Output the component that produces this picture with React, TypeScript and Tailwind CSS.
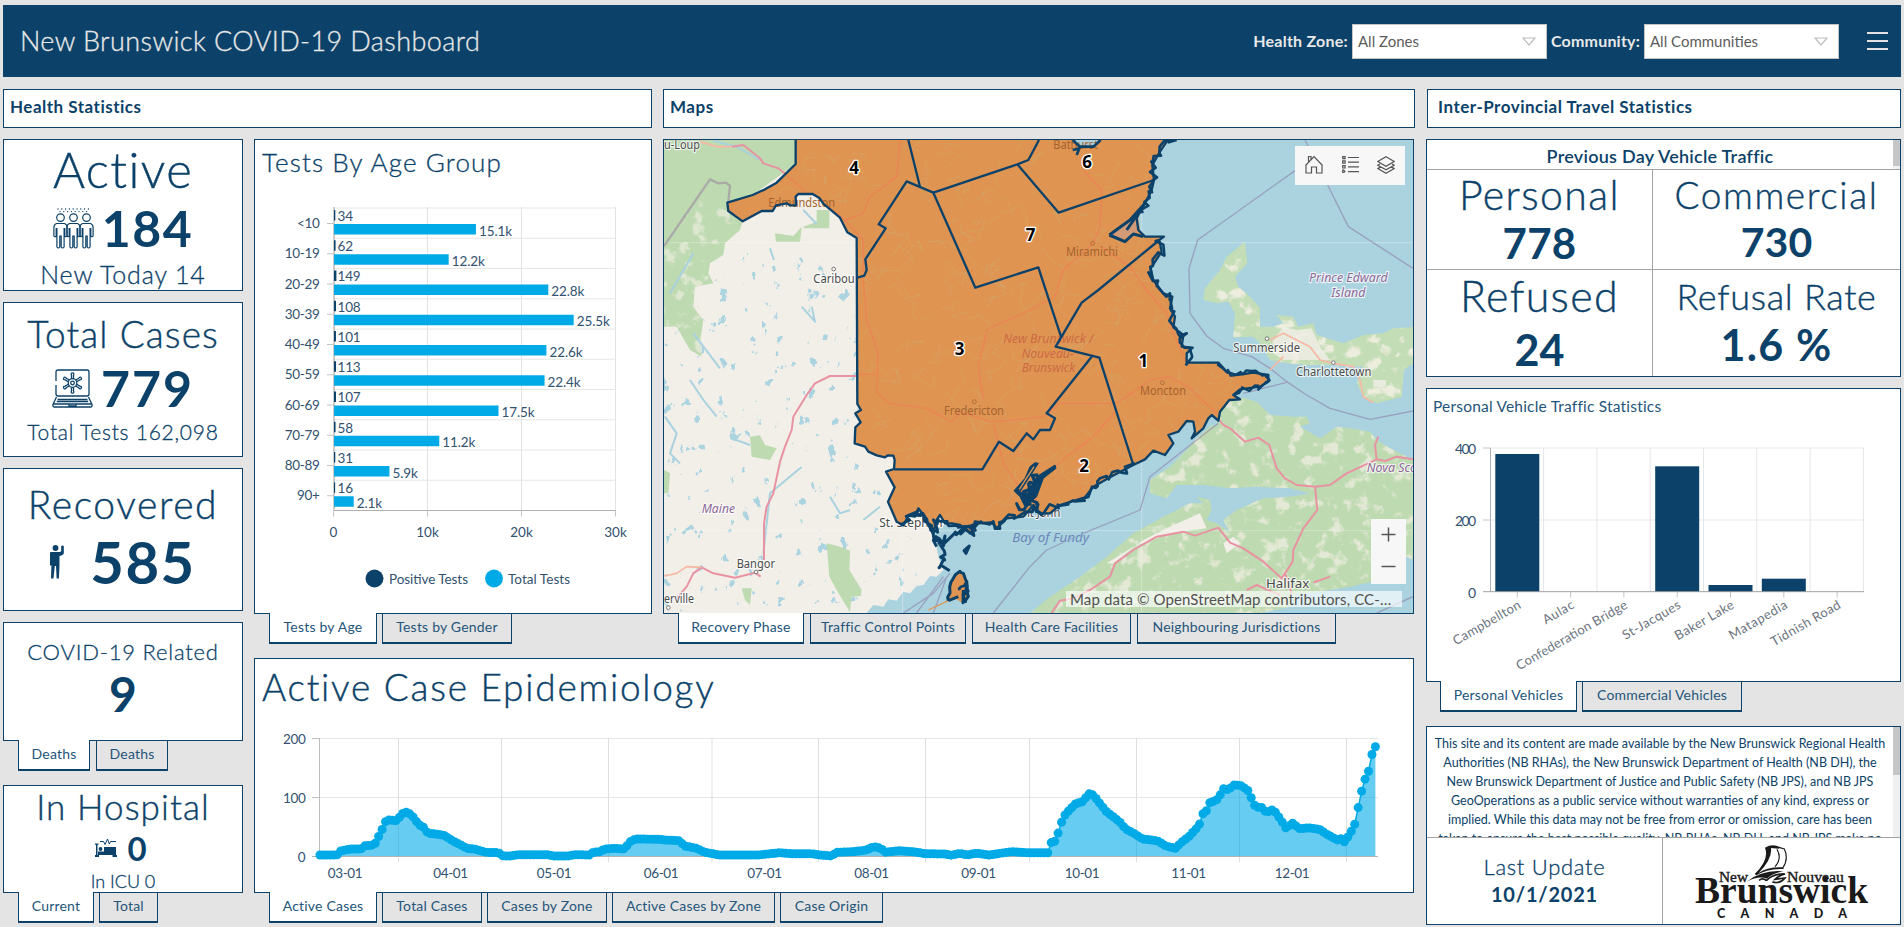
import { Fragment, type ReactNode } from "react";

const NAVY = "#0c4269";
const SKY = "#00aae7";

/* ---------- shared pieces ---------- */

function Panel({ className = "", children }: { className?: string; children: ReactNode }) {
  return <section className={`overflow-hidden border border-[#0c4269] bg-white ${className}`}>{children}</section>;
}

function Tabs({ items, gap = "gap-[5px]", inset = "ml-[15px]" }: { items: [string, string][]; gap?: string; inset?: string }) {
  return (
    <div className={`relative -mt-px flex h-[31px] ${inset} ${gap}`}>
      {items.map(([label, width], i) => (
        <button
          key={i}
          className={`${width} whitespace-nowrap border-x border-b-2 border-[#0c4269] pb-[3px] text-center text-[14px] tracking-[0.2px] text-[#24557a] ${
            i === 0 ? "bg-white" : "border-t bg-[#e4e4e4]"
          }`}
        >
          {label}
        </button>
      ))}
    </div>
  );
}

/* ---------- icons ---------- */

function PeopleIcon() {
  const dots: [number, number][] = [];
  for (let i = 0; i < 9; i++) {
    dots.push([5 + i * 3.8, 1]);
    if (i < 8) dots.push([7 + i * 3.8, 3.6]);
  }
  return (
    <svg className="h-[41px] w-[41px]" viewBox="0 0 41 41" fill="none" stroke={NAVY} strokeWidth="1.2">
      {dots.map(([x, y], i) => (
        <circle key={i} cx={x} cy={y} r=".7" fill={NAVY} stroke="none" />
      ))}
      {[7.5, 20.5, 33.5].map((x) => (
        <Fragment key={x}>
          <circle cx={x} cy="9.6" r="3.8" />
          <path d={`M${x - 4} 15.5h8q2.600 1 2.600 4v8.500q-1 1.500-2.300 0v-8M${x - 4} 15.500q-2.600 1-2.600 4v8.500q1 1.500 2.300 0v-8M${x - 3.600} 20v19q1.500 2 2.900 0v-11h1.400v11q1.400 2 2.900 0v-19`} />
        </Fragment>
      ))}
    </svg>
  );
}

function LaptopIcon() {
  return (
    <svg className="h-[39px] w-[41px]" viewBox="0 0 41 39" fill="none" stroke={NAVY} strokeWidth="1.3">
      <path d="M4 12V3q0-2 2-2h29q2 0 2 2v22q0 2-2 2H6q-2 0-2-2V16" />
      <path d="M4.500 28L1 35.500q-.5 2.500 1.500 2.500h36q2 0 1.500-2.500L36.500 28M1 35h39M5.500 30.500h30M4.800 32.500h31.400M17 35.500v1.300h7v-1.300" />
      <circle cx="20.500" cy="14" r="4.300" />
      <circle cx="20.500" cy="14" r="1.800" />
      {[0, 60, 120, 180, 240, 300].map((a) => (
        <path key={a} transform={`rotate(${a} 20.500 14)`} d="M19.500 9.800V6.200q-1-2.300 1-2.300t1 2.300v3.600" />
      ))}
    </svg>
  );
}

function PersonIcon() {
  return (
    <svg className="h-[34px] w-[14px]" viewBox="0 0 14 34" fill={NAVY}>
      <circle cx="5.500" cy="3" r="2.900" />
      <path d="M1 7h8q1.800 0 2.200-.8V1q1.400-1 2.600 0v7q0 2-4.300 3v9.500l-.6 13H6.600L6 21H4.800L3.500 33.500H1l.4-13H0V8q0-1 1-1z" />
    </svg>
  );
}

function BedIcon() {
  return (
    <svg className="h-[20px] w-[22px]" viewBox="0 0 22 20" fill={NAVY}>
      <path d="M0 5.500h3.500v1.200H2.500V17H4v2H0v-2h1V6.700H0zM17.500 17h1V9H21v8h1v2h-4.500z" />
      <path d="M3 14h17v3H3zM9 9h12v6H3v-1.500h6z" />
      <circle cx="5.500" cy="11" r="1.900" />
      <path d="M5 3.500h3.500l1.500 3L12.500 1l1.800 5 1.200-2.500H21" fill="none" stroke={NAVY} strokeWidth="1" />
    </svg>
  );
}

/* ---------- header ---------- */

function Select({ value }: { value: string }) {
  return (
    <div className="flex h-[35px] w-[195px] items-center justify-between border border-[#c4c4c4] bg-white pr-[10px] pl-[5px] text-[15px] text-[#5c5c5c]">
      <span>{value}</span>
      <svg className="h-[9px] w-[14px]" viewBox="0 0 14 9" fill="none" stroke="#bdbdbd" strokeWidth="1.200">
        <path d="M1 1h12L7 8z" />
      </svg>
    </div>
  );
}

function Header() {
  return (
    <header className="flex h-[72px] items-center bg-[#0c4269] text-[#e8e8e8]">
      <h1 className="ml-[17px] flex-1 text-[27px] font-light tracking-[0.4px] [-webkit-text-stroke:0.3px]">New Brunswick COVID-19 Dashboard</h1>
      <span className="mr-[4px] text-[16px] font-bold tracking-[0.25px]">Health Zone:</span>
      <Select value="All Zones" />
      <span className="mr-[4px] ml-[4px] text-[16px] font-bold tracking-[0.2px]">Community:</span>
      <Select value="All Communities" />
      <svg className="mr-[13px] ml-[28px] h-[18px] w-[21px]" viewBox="0 0 21 18" stroke="#e4e4e4" strokeWidth="2">
        <path d="M0 1h21M0 9h21M0 17h21" />
      </svg>
    </header>
  );
}

/* ---------- age chart ---------- */

const ages: [string, number, string, number][] = [
  ["<10", 34, "15.1k", 15.1],
  ["10-19", 62, "12.2k", 12.2],
  ["20-29", 149, "22.8k", 22.8],
  ["30-39", 108, "25.5k", 25.5],
  ["40-49", 101, "22.6k", 22.6],
  ["50-59", 113, "22.4k", 22.4],
  ["60-69", 107, "17.5k", 17.5],
  ["70-79", 58, "11.2k", 11.2],
  ["80-89", 31, "5.9k", 5.9],
  ["90+", 16, "2.1k", 2.1],
];

function AgeChart() {
  return (
    <svg className="block h-[429px] w-[396px]" viewBox="255 184 396 429" fontSize="13.500" fill="#32526f">
      {[427.500, 521.500, 615.500].map((x) => (
        <path key={x} d={`M${x} 207V510`} stroke="#e2e2e2" />
      ))}
      {ages.map((_, i) => (
        <path key={i} d={`M334 ${208 + i * 30.25}H615.500`} stroke="#e6e6e6" />
      ))}
      <path d="M334 207V510" stroke="#9a9a9a" />
      {ages.map(([label, pos, total, k], i) => {
        const y = 208 + i * 30.25;
        const end = 334 + k * 9.4;
        return (
          <Fragment key={label}>
            <path d={`M327 ${y + 15.500}h7`} stroke="#c4c4c4" />
            <text x="319.500" y={y + 20} textAnchor="end" letterSpacing="-.3">{label}</text>
            <rect x="334" y={y + 2} width={1 + pos * 0.0094} height="10.500" fill={NAVY} />
            <text x="337.500" y={y + 12.800} letterSpacing="-.2">{pos}</text>
            <rect x="334" y={y + 16} width={end - 334} height="10.500" fill={SKY} />
            <text x={end + 3} y={y + 27.700} letterSpacing="-.1">{total}</text>
          </Fragment>
        );
      })}
      <path d="M334 510.500H616" stroke="#b0b0b0" />
      {["0", "10k", "20k", "30k"].map((t, i) => (
        <Fragment key={t}>
          <path d={`M${333.500 + i * 94} 510.500v6`} stroke="#c4c4c4" />
          <text x={333.500 + i * 94} y="537" textAnchor="middle">{t}</text>
        </Fragment>
      ))}
      <circle cx="374.500" cy="578.500" r="9" fill={NAVY} />
      <circle cx="494" cy="578.500" r="9" fill={SKY} />
      <text x="389" y="584" textLength="79">Positive Tests</text>
      <text x="508" y="584" textLength="62">Total Tests</text>
    </svg>
  );
}

/* ---------- epidemiology chart ---------- */

const curve: [number, number][] = [
  [320, 855], [337, 855], [341, 850.7], [351, 849], [361, 849], [365, 845.7], [374, 845], [377, 840.7], [380, 833], [383, 828],
  [385.5, 821.7], [389, 820], [396, 820.7], [400, 816.7], [403, 813.3], [406.6, 812], [410, 814], [414.6, 818.3], [418, 824], [422, 826.7],
  [425, 828], [427.6, 833.3], [433.5, 833.7], [444, 835.3], [452.4, 840.7], [458.8, 844], [467, 848.3], [475.6, 849.3], [486, 852.3], [498.7, 852.7],
  [503, 856], [511, 856], [517.7, 854.7], [547, 854.7], [553.5, 856], [568, 856], [574.5, 854.7], [589, 855], [593.4, 852.3], [599.7, 851.7],
  [604.8, 849], [614.5, 848.3], [625, 849], [629, 842.3], [635.5, 839], [660, 839.3], [664.7, 840], [679.5, 840.7], [684.4, 846], [696.7, 848.3],
  [704, 852], [718.8, 855], [758, 855], [780, 852.7], [790, 853.7], [812, 853.7], [819.5, 855], [831.7, 856], [836.6, 852.3], [853.8, 851.7],
  [866, 850], [873.5, 846.7], [880.8, 848.3], [885.8, 852.3], [898, 850.7], [915, 852], [925, 853.7], [944.7, 854], [952, 855.3], [959.4, 853.3],
  [966.8, 855], [976.6, 853.3], [989, 855], [1011, 851.7], [1028, 852.7], [1047.8, 852.7], [1051.3, 842.3], [1054.7, 841.3], [1057.7, 834.3], [1061.6, 822],
  [1065.5, 814], [1076, 803.3], [1082, 802], [1089.6, 793.3], [1093.5, 795.3], [1099, 802.3], [1106.8, 812], [1114, 817.3], [1120.5, 822.7], [1125.5, 829],
  [1133.8, 833.3], [1142.6, 839], [1157.4, 840.7], [1165.7, 846], [1175.5, 848.3], [1181.4, 842.3], [1188.8, 836.7], [1194, 831], [1199, 825.7], [1202.6, 814],
  [1206.5, 810.7], [1210, 802.3], [1216, 800.7], [1221, 793.7], [1224, 788], [1228, 790], [1234.5, 784.7], [1241.4, 785.7], [1248, 790.7], [1251.7, 798.7],
  [1255.6, 807.3], [1261.5, 807.3], [1266.4, 812.7], [1273.3, 809.3], [1281, 820], [1286, 828.3], [1292.4, 823], [1300, 829], [1308, 827.7], [1319.5, 829.3],
  [1328, 835], [1337.6, 840], [1341, 838.7], [1344, 842.3], [1348, 836.7], [1351.4, 831], [1355.3, 823], [1358, 808.3], [1361.7, 790.7], [1365, 779.3],
  [1368.6, 771], [1372, 754.3], [1375.4, 746.7],
];

function sampleCurve(count: number): [number, number][] {
  const step = (1375.4 - 320) / (count - 1);
  return Array.from({ length: count }, (_, i) => {
    const x = 320 + i * step;
    let k = curve.findIndex((p) => p[0] >= x - 0.001);
    if (k < 0) k = curve.length - 1;
    if (k === 0) return curve[0];
    const [x0, y0] = curve[k - 1];
    const [x1, y1] = curve[k];
    return [x, y0 + ((x - x0) / (x1 - x0)) * (y1 - y0)];
  });
}

const days = sampleCurve(307);
const months: [string, number][] = [
  ["03-01", 345], ["04-01", 450.5], ["05-01", 554], ["06-01", 661], ["07-01", 764.5],
  ["08-01", 871.5], ["09-01", 978.5], ["10-01", 1082], ["11-01", 1188.5], ["12-01", 1292],
];

function EpidemiologyChart() {
  const line = days.map(([x, y]) => `${x.toFixed(1)} ${y.toFixed(1)}`).join("L");
  return (
    <svg className="block h-[177px] w-[1158px]" viewBox="255 715 1158 177" fontSize="13.500" fill="#32526f">
      <path d="M319 738.500H1378M319 797.500H1378" stroke="#e6e6e6" />
      {[398.5, 501.5, 608.5, 712, 818.5, 925.5, 1029.5, 1136.5, 1239.5, 1346.5].map((x) => (
        <path key={x} d={`M${x} 738V862`} stroke="#dfdfdf" />
      ))}
      <path d={`M320 856.500L${line}L1375.400 856.500Z`} fill={SKY} fillOpacity=".6" />
      <path d="M312 738.500h7M312 797.500h7M319.500 738V856" stroke="#bdbdbd" fill="none" />
      <path d="M312 856.500H1378" stroke="#b3b3b3" />
      <path d={`M${line}`} fill="none" stroke={SKY} strokeWidth="1.500" />
      {days.map(([x, y]) => (
        <circle key={x} cx={x} cy={y} r="4.500" fill={SKY} />
      ))}
      <text x="305.500" y="743.500" textAnchor="end" letterSpacing="-.3">200</text>
      <text x="305.500" y="803" textAnchor="end" letterSpacing="-.3">100</text>
      <text x="305.500" y="861.500" textAnchor="end">0</text>
      {months.map(([m, x]) => (
        <text key={m} x={x} y="877.500" textAnchor="middle" letterSpacing="-.4">{m}</text>
      ))}
    </svg>
  );
}

/* ---------- vehicle chart ---------- */

const vehicles: [string, number, number][] = [
  ["Campbellton", 454, 76],
  ["Aulac", 0, 34],
  ["Confederation Bridge", 0, 126],
  ["St-Jacques", 466.3, 65],
  ["Baker Lake", 585, 66],
  ["Matapedia", 578.7, 65],
  ["Tidnish Road", 0, 78],
];

function VehicleChart() {
  return (
    <svg className="block h-[256px] w-[473px]" viewBox="1427 425 473 256" fontSize="14" fill="#32526f">
      <path d="M1490 448H1864M1490 520H1864" stroke="#e9e9e9" />
      {vehicles.map(([name, top, len], i) => {
        const x = 1490.3 + i * 53.3;
        return (
          <Fragment key={name}>
            <path d={`M${x + 53.3} 448V592`} stroke="#e6e6e6" />
            {top > 0 && <rect x={x + 5} y={top} width="44" height={592 - top} fill={NAVY} />}
            <path d={`M${x + 27} 592v5.500`} stroke="#c4c4c4" />
            <text transform={`translate(${x + 31.500} 607.500) rotate(-30)`} textAnchor="end" textLength={len} fontSize="13" fill="#6c7480">
              {name}
            </text>
          </Fragment>
        );
      })}
      <path d="M1483 448h7M1483 520h7" stroke="#c4c4c4" />
      <path d="M1490.500 448V592" stroke="#b0b0b0" />
      <path d="M1483 591.700H1864" stroke="#a0a0a0" />
      <text x="1476" y="453.500" textAnchor="end" textLength="21">400</text>
      <text x="1476" y="525.500" textAnchor="end" textLength="21">200</text>
      <text x="1476" y="597.500" textAnchor="end">0</text>
    </svg>
  );
}

/* ---------- map ---------- */

function seeded(seed: number) {
  let s = seed;
  return () => {
    s = (s * 16807) % 2147483647;
    return s / 2147483647;
  };
}

/* Roughens a polyline into a coast-like outline. */
function jag(points: number[][], amp: number, step: number, seed: number) {
  const rnd = seeded(seed);
  let d = `M${points[0][0]} ${points[0][1]}`;
  for (let i = 1; i < points.length; i++) {
    const [x0, y0] = points[i - 1];
    const [x1, y1] = points[i];
    const n = Math.max(1, Math.round(Math.hypot(x1 - x0, y1 - y0) / step));
    for (let k = 1; k <= n; k++) {
      const t = k / n;
      d += `L${(x0 + (x1 - x0) * t + (rnd() - 0.5) * amp).toFixed(0)} ${(y0 + (y1 - y0) * t + (rnd() - 0.5) * amp).toFixed(0)}`;
    }
  }
  return d;
}

const NB_WEST =
  "M437 170V252L380 308L345 328L308 345L232 368L235 393L278 424L335 393H368L378 376L410 370L420 376H438L437 350L445 342H488L508 354L520 371L570 413L592 457L620 474L622 972L633 990L616 1000L632 1027L616 1042L614 1090L645 1100L655 1115L680 1126L705 1132L714 1126L730 1127L734 1140L732 1167";
const NB_OUTLINE =
  NB_WEST +
  "L708 1175L734 1222L714 1265L740 1325L760 1336L775 1307L795 1310L805 1285L825 1310L840 1345L850 1362L860 1320L870 1305L885 1330H905L930 1335L960 1360L985 1330L1025 1327L1040 1345L1070 1315L1120 1310L1150 1275L1170 1300H1200L1230 1275L1305 1252L1330 1220L1380 1192L1450 1155L1485 1138L1510 1112L1545 1125L1570 1090L1555 1065L1585 1055L1610 1023L1630 1025L1635 1055L1625 1075L1660 1045L1675 1015L1685 1005L1705 1022L1710 995L1738 960L1770 958L1750 945L1770 928L1830 920L1855 905V885L1810 878L1760 885L1730 875L1705 848H1670H1610V820L1628 803L1595 800L1600 765L1570 742L1575 710L1560 685L1567 650L1540 640L1510 600L1502 565L1535 515L1528 480L1542 470H1485L1465 450L1460 415L1475 385L1485 370L1505 330L1512 300L1507 255L1530 215L1550 185L1580 170Z";
const ZONE_LINES =
  "M775 180L810 320M622 593L643 587L650 570L646 538L707 445L686 433L770 304L850 338L1102 253L1135 240L1167 180M850 338L976 623L1165 562L1233 770M1102 253L1226 398L1512 300M1528 480L1345 630L1295 668L1217 800L1348 833L1450 1155M1325 830L1190 1000L1215 1015L1200 1050L1170 1050L1150 1078L1130 1060L1090 1113L1047 1085L997 1168H732";

const NE_COAST = [[1580, 180], [1540, 190], [1530, 215], [1507, 255], [1512, 300], [1505, 330], [1485, 370], [1465, 410]];
const E_COAST = [[1528, 480], [1535, 515], [1502, 565], [1510, 600], [1540, 640], [1567, 650], [1560, 685], [1570, 742], [1600, 765], [1595, 800], [1628, 803], [1610, 848]];
const CAPE = [[1705, 848], [1730, 875], [1760, 885], [1810, 878], [1855, 885], [1855, 905], [1830, 920], [1770, 928], [1750, 945]];
const S_COAST = [[760, 1336], [775, 1307], [805, 1295], [830, 1315], [850, 1362], [865, 1310], [905, 1330], [930, 1340], [960, 1360], [985, 1330], [1025, 1327], [1040, 1345], [1070, 1315], [1120, 1310], [1150, 1275], [1170, 1300], [1230, 1275], [1305, 1252], [1330, 1220], [1380, 1192], [1450, 1155]];

const PEI =
  "M1785 485L1792 550L1755 590L1765 620L1800 650L1830 685V740H1870L1900 730L1880 705L1930 710L1945 740L1990 730L2000 765L2080 790L2140 765L2200 760L2230 745L2290 742V850L2262 870L2255 950L2180 970L2140 950L2120 910L2140 860L2040 855L1970 855L1910 850L1860 840L1830 790L1810 770L1750 772L1755 700L1735 665L1700 670L1660 660L1665 625L1710 570L1730 530Z";
const NS =
  "M1710 995L1738 960L1780 953L1820 965L1860 1005L1930 1010L1970 1010L1980 1030L1950 1040L2010 1075L2060 1040L2100 1045L2160 1055L2180 1080L2220 1105L2290 1140V1440L2270 1430L2240 1460L2190 1500L2100 1520L2040 1530L1980 1540L1940 1540L1920 1580L1830 1600H1140L1200 1550L1290 1490L1370 1430L1450 1360L1540 1310L1620 1270L1660 1270L1640 1250L1680 1260L1685 1290L1670 1320L1700 1330L1730 1350L1740 1360L1720 1320L1760 1290L1840 1255L1920 1250L1980 1240L1920 1225L1820 1220L1740 1225L1660 1215L1580 1215L1550 1255L1500 1240L1500 1200L1560 1160L1610 1110L1640 1075L1685 1035L1700 1040Z";
const GREEN_WEST =
  "M42 180H437V252L308 345L232 368L235 393L278 424L270 450L225 490L220 525L180 550L175 580L190 610L135 620L130 680L160 720L150 790L155 830L120 810L80 740L42 740Z";

function backRoads() {
  const rnd = seeded(77);
  let d = "";
  for (let i = 0; i < 360; i++) {
    let x = 440 + rnd() * 1300;
    let y = 190 + rnd() * 1130;
    d += `M${x.toFixed(0)} ${y.toFixed(0)}`;
    for (let k = 0; k < 3; k++) {
      x += (rnd() - 0.5) * 90;
      y += (rnd() - 0.5) * 80;
      d += `L${x.toFixed(0)} ${y.toFixed(0)}`;
    }
  }
  return d;
}

type Label = [string, number, number, number, string, string];
const PLACE = "#4a4a4a";
const FADED = "#a4632f";
const REGION = "#8d6797";
const mapLabels: Label[] = [
  ["u-Loup", 42, 207, 108, PLACE, "normal"],
  ["Caribou", 490, 608, 124, PLACE, "normal"],
  ["Bangor", 260, 1463, 115, PLACE, "normal"],
  ["erville", 42, 1570, 90, PLACE, "normal"],
  ["Summerside", 1750, 816, 200, PLACE, "normal"],
  ["Charlottetown", 1938, 888, 226, PLACE, "normal"],
  ["Halifax", 1848, 1525, 130, PLACE, "normal"],
  ["Maine", 155, 1300, 100, REGION, "italic"],
  ["Prince Edward", 1977, 606, 236, REGION, "italic"],
  ["Island", 2044, 651, 102, REGION, "italic"],
  ["Nova Scotia", 2150, 1175, 194, REGION, "italic"],
];
const coastLabels: Label[] = [
  ["St. Stephen", 688, 1342, 190, PLACE, "normal"],
  ["Saint John", 1073, 1312, 158, PLACE, "normal"],
];
const fadedLabels: Label[] = [
  ["Edmundston", 355, 380, 200, FADED, "normal"],
  ["Bathurst", 1210, 208, 134, FADED, "normal"],
  ["Miramichi", 1248, 528, 156, FADED, "normal"],
  ["Fredericton", 882, 1006, 180, FADED, "normal"],
  ["Moncton", 1470, 946, 138, FADED, "normal"],
  ["New Brunswick /", 1060, 788, 270, "#cc6a45", "italic"],
  ["Nouveau-", 1115, 834, 156, "#cc6a45", "italic"],
  ["Brunswick", 1115, 877, 160, "#cc6a45", "italic"],
];

function MapText({ label, halo }: { label: Label; halo: boolean }) {
  const [text, x, y, len, fill, style] = label;
  return (
    <text
      x={x}
      y={y}
      textLength={len}
      lengthAdjust="spacingAndGlyphs"
      fill={fill}
      fontStyle={style}
      stroke={halo ? "#ffffff" : "none"}
      strokeOpacity=".75"
      strokeWidth={halo ? 7 : 0}
      paintOrder="stroke"
    >
      {text}
    </text>
  );
}

const zones: [string, number, number][] = [
  ["4", 612, 281], ["6", 1311, 265], ["7", 1142, 484], ["3", 929, 824], ["1", 1480, 860], ["2", 1302, 1176],
];

function ProvinceMap() {
  return (
    <svg
      className="block h-[473px] w-[749px]"
      viewBox="42 180 2247 1419"
      fontFamily="'Noto Sans', 'Open Sans', sans-serif"
      fontSize="38"
      strokeLinejoin="round"
    >
      <defs>
        <filter id="clearings" x="0" y="0" width="1" height="1" colorInterpolationFilters="sRGB">
          <feTurbulence type="fractalNoise" baseFrequency=".024" numOctaves="6" seed="4" />
          <feColorMatrix values="0 0 0 0 .93  0 0 0 0 .93  0 0 0 0 .87  0 6 0 0 -3.3" />
          <feComposite in2="SourceGraphic" operator="in" />
        </filter>
        <filter id="lakes" x="0" y="0" width="1" height="1" colorInterpolationFilters="sRGB">
          <feTurbulence type="fractalNoise" baseFrequency=".03 .024" numOctaves="4" seed="11" />
          <feColorMatrix values="0 0 0 0 .67  0 0 0 0 .83  0 0 0 0 .88  0 24 0 0 -16.800" />
          <feComposite in2="SourceGraphic" operator="in" />
        </filter>
      </defs>
      <rect x="42" y="180" width="2247" height="1419" fill="#aad3df" />
      <path d="M42 180H1500L1300 1000L960 1300L850 1350L865 1430L880 1470L860 1490L840 1488L820 1515L800 1518L780 1540L760 1535L740 1562L715 1558L700 1580L670 1575L650 1599H42Z" fill="#f2efe9" />
      <path d="M42 520H620V970L740 1330L850 1450L700 1560L42 1599Z" fill="#000" filter="url(#lakes)" />
      <path d={GREEN_WEST} fill="#bddab1" />
      <path d="M42 480L150 360L232 393L278 424L225 490L180 550L190 610L135 620L160 720L155 830L80 740H42Z" fill="#000" filter="url(#clearings)" opacity=".7" />
      <path d="M460 440L500 425V390H538V445H462ZM375 460L430 468L455 440L450 485H378Z" fill="#bddab1" />
      <path d="M530 1390L570 1400L600 1412L598 1470L635 1530L632 1548L604 1550L600 1597L560 1530L538 1490ZM300 1070L330 1066L345 1095L380 1105L360 1140L305 1130ZM42 1170L60 1180L55 1240H42ZM275 1525L305 1525L300 1575L285 1560Z" fill="#bddab1" />
      <path d="M190 182L260 200L330 240M130 520L60 640M460 390L500 432M360 505L372 540M455 680L495 725L485 680M130 760L210 865M120 900L160 960L200 1010M245 1075L300 1095M45 1010L80 1060L60 1120L90 1150M340 1420L360 1240L450 1165M540 1250L570 1300L600 1290M640 1320L690 1280" fill="none" stroke="#a9d2de" strokeWidth="6" />
      <path d={NS} fill="#bddab1" />
      <path d={NS} fill="#000" filter="url(#clearings)" opacity=".8" />
      <path d="M1390 1450L1480 1380L1560 1340L1650 1300L1670 1345L1560 1360L1450 1400L1370 1450ZM1720 1390L1750 1370L1770 1390L1730 1420Z" fill="#f2efe9" />
      <path d={PEI} fill="#c3ddb6" />
      <path d={PEI} fill="#000" filter="url(#clearings)" />
      <path d="M1870 780L1900 740L1940 750L1985 745L2010 800L2040 840L1900 840L1870 820ZM2170 900H2208V920H2170Z" fill="#f2efe9" fillOpacity=".8" />
      <path d="M1475 180V1599M42 488H2289M758 1350V1599M42 1352H2289" stroke="#fff" strokeOpacity=".45" strokeWidth="2" />
      <g fill="none" stroke="#8e7ea8" strokeOpacity=".6" strokeWidth="4">
        <path d="M42 498L180 298L205 310L228 308L240 318L235 365" stroke="#9d8aa0" strokeWidth="7" />
        <path d="M1935 272L1643 480L1617 565L1620 700L1670 768L1720 805L1805 830L1860 865L1910 905L1970 945L2040 985L2160 1018L2289 993M1965 180L2033 315L2095 440L2289 565M1910 907L1780 940M1705 1030L1640 1080L1500 1190L1470 1290L1300 1360L1190 1410L1140 1460L1030 1599M880 1490L800 1599M890 1490L850 1599M900 1480L850 1540L760 1599M2289 1550L2180 1599" />
      </g>
      <g fill="none" stroke="#e892a2" strokeWidth="6">
        <path d="M245 200L280 195L330 235L340 250L385 265L410 285M620 888H540L495 910L470 945L430 1010L425 1050L405 1100L390 1145L370 1240L350 1280L342 1330V1440M332 1490L315 1478L255 1493L190 1480L155 1462L130 1480L110 1520L80 1555" />
        <path d="M1708 1020L1720 1035L1740 1045L1785 1085L1825 1073L1858 1095L1880 1165L1905 1195L1940 1215L1995 1220L2040 1215L2090 1180L2180 1138L2205 1143L2240 1130L2289 1138M1995 1220L2002 1290L1960 1345L1930 1410L1928 1445L1895 1495L1840 1445L1780 1405L1740 1388L1705 1343L1635 1367L1600 1355L1520 1370L1450 1410L1395 1450L1380 1490L1320 1530L1270 1555L1230 1562L1205 1599M2185 1070L2175 1095L2180 1138M1790 1530L1820 1515L1890 1545M1905 1480L1925 1540M1990 1508L2040 1490" />
        <path d="M42 1488L80 1480L110 1460L155 1462M150 185L200 200L245 200M1860 780L1900 760L1980 800L2010 840L2050 850L2110 860L2130 900L2140 950L2170 968M1900 830L1860 870" stroke="#f6b8a4" strokeWidth="5" />
      </g>
      {coastLabels.map((l) => <MapText key={l[0]} label={l} halo />)}
      <path d={NB_OUTLINE} fill="#e09451" />
      <path d="M1378 465L1440 420L1465 410L1470 450L1440 470L1400 480Z" fill="#d39a78" />
      <path d="M1268 170L1290 200L1330 200L1352 170Z" fill="#aad3df" />
      <g clipPath="url(#nb)" fill="none">
        <path d={backRoads()} stroke="#cfae72" strokeOpacity=".6" strokeWidth="2" />
        <path d="M410 285L460 330L575 410L640 480V600L650 720L685 820L680 940L720 970L830 985L905 1025L930 995L1020 1025L1100 1020L1180 1010L1230 970L1400 970L1500 900L1560 890L1620 925L1700 1000M575 425L640 400L660 350L740 290L750 180M1300 270L1355 330L1350 440L1330 490L1240 570L1215 650L1140 690L1010 750L985 860L1000 960M1355 500L1440 560L1490 630L1550 700L1570 760L1610 850M1150 1290L1170 1200L1250 1130L1330 1070L1400 990M622 883H680M1030 1030L1060 1150L1140 1270" stroke="#ef7f55" strokeOpacity=".75" strokeWidth="4" />
      </g>
      <clipPath id="nb"><path d={NB_OUTLINE} /></clipPath>
      {fadedLabels.map((l) => <MapText key={l[0]} label={l} halo={false} />)}
      <g fill="none" stroke={NAVY} strokeWidth="7">
        <path d={NB_OUTLINE} />
        <path d={ZONE_LINES} />
        <path d="M1268 180L1290 200L1280 225M1290 200H1330L1352 180M1268 210L1290 205" strokeWidth="8" />
        <path d="M1378 465L1440 420L1485 370M1378 465L1425 485L1450 462L1480 470M1430 450L1465 400" strokeWidth="9" />
        <path d={jag(NE_COAST, 22, 12, 5)} strokeWidth="8" />
        <path d={jag(E_COAST, 26, 14, 9)} strokeWidth="8" />
        <path d={jag(CAPE, 18, 12, 3)} />
        <path d={jag(S_COAST, 24, 12, 21)} strokeWidth="8" />
        <path d={jag([[805, 1290], [845, 1350], [870, 1390], [880, 1420], [870, 1455], [890, 1475]], 26, 9, 14)} strokeWidth="9" />
        <path d={jag([[860, 1400], [900, 1375], [940, 1350], [985, 1335]], 34, 8, 31)} strokeWidth="9" />
        <path d={jag([[1110, 1290], [1150, 1270], [1180, 1300]], 34, 8, 8)} strokeWidth="9" />
      </g>
      <path d="M1155 1148L1165 1150L1110 1235L1130 1245L1160 1190L1215 1155L1218 1165L1180 1195L1160 1250L1125 1280L1110 1250L1092 1232L1125 1195L1140 1160Z" fill={NAVY} stroke={NAVY} strokeWidth="3" />
      <path d="M1152 1160L1108 1228" stroke="#e09451" strokeWidth="4" />
      <path d={jag([[1165, 1185], [1135, 1240], [1125, 1270]], 28, 9, 2)} fill="none" stroke={NAVY} strokeWidth="10" />
      <path d="M895 1562L905 1510L925 1477L945 1485L950 1510L955 1552L940 1568L920 1555ZM835 1590L895 1562" fill="#e09451" stroke="#e09451" strokeWidth="4" />
      <path d={jag([[895, 1562], [905, 1510], [925, 1477], [945, 1485], [950, 1510], [955, 1552], [938, 1570]], 10, 12, 6) + "L940 1530M895 1562L925 1550M942 1412L958 1398L948 1420Z"} fill="none" stroke={NAVY} strokeWidth="9" />
      <path d={jag([[930, 1530], [950, 1510], [945, 1560], [955, 1530]], 16, 8, 12)} fill="none" stroke={NAVY} strokeWidth="8" />
      {mapLabels.map((l) => <MapText key={l[0]} label={l} halo />)}
      <text x="1087" y="1386" textLength="230" lengthAdjust="spacingAndGlyphs" fontStyle="italic" fill="#6c86b8" stroke="#aad3df" strokeWidth="4" paintOrder="stroke">Bay of Fundy</text>
      {[[551, 567], [318, 1476], [1851, 776], [2050, 848], [55, 1583]].map(([x, y]) => (
        <circle key={x} cx={x} cy={y} r="5.500" fill="#fff" stroke="#777" strokeWidth="3" />
      ))}
      {[[1328, 490], [973, 965], [1537, 908]].map(([x, y]) => (
        <circle key={x} cx={x} cy={y} r="6" fill="none" stroke="#b5703a" strokeWidth="3" />
      ))}
      {zones.map(([n, x, y]) => (
        <text key={n} x={x} y={y} textAnchor="middle" fontSize="51" fontWeight="700" stroke="#fff" strokeWidth="8" paintOrder="stroke">{n}</text>
      ))}
    </svg>
  );
}

function MapPanel() {
  return (
    <Panel className="relative h-[475px] w-[751px]">
      <ProvinceMap />
      <div className="absolute top-[6px] right-[8px] flex h-[39px] w-[110px] items-center justify-between bg-[#f7f7f7] px-[10px] pb-[2px]">
        <svg className="h-[19px] w-[18px]" viewBox="0 0 18 19" fill="none" stroke="#555" strokeWidth="1.200">
          <path d="M1 9.500V18H6.500V12H11.500V18H17V9.500M.5 10.500L9 1.500L17.500 10.500M3.500 7.500V1.500H6V4.500" />
        </svg>
        <svg className="h-[17px] w-[17px]" viewBox="0 0 17 17" fill="none" stroke="#555" strokeWidth="1.200">
          <path d="M6 1.500h11M6 6.200h11M6 10.900h11M6 15.600h11" />
          <path d="M.7.600h2.400v2H.7zM.7 4.900h2.400v2.300H.7zM.7 9.700h2.400v2.300H.7zM.7 14h1l1.200 1.400-1.200 1.200h-1z" />
        </svg>
        <svg className="h-[18px] w-[18px]" viewBox="0 0 18 18" fill="none" stroke="#555" strokeWidth="1.200">
          <path d="M9 .8L17.200 5.500L9 10.200L.8 5.500ZM3 8L.8 9.200L9 13.800L17.200 9.200L15 8M3 11.400L.8 12.600L9 17.200L17.200 12.600L15 11.400" />
        </svg>
      </div>
      <div className="absolute right-[7px] bottom-[29px] flex h-[65px] w-[35px] flex-col items-center justify-around bg-[#f7f7f7] pb-[2px]">
        <svg className="h-[15px] w-[15px]" viewBox="0 0 15 15" stroke="#555" strokeWidth="1.500">
          <path d="M.5 7.500h14M7.500.5v14" />
        </svg>
        <svg className="h-[15px] w-[15px]" viewBox="0 0 15 15" stroke="#555" strokeWidth="1.500">
          <path d="M.5 7.500h14" />
        </svg>
      </div>
      <div className="absolute right-[11px] bottom-[6px] h-[16px] w-[336px] bg-white/65 pl-[4px] text-[15px] leading-[16px] tracking-[0.12px] whitespace-nowrap text-[#505050]">
        Map data © OpenStreetMap contributors, CC-…
      </div>
    </Panel>
  );
}

/* ---------- right column ---------- */

function Logo() {
  return (
    <svg className="h-[86px] w-[237px]" viewBox="1663 838 237 86" fill="#1b1a1b" fontFamily="'Liberation Serif', serif">
      <g transform="translate(1685 838) scale(.33333)">
        <path d="M240 29Q262 16 284 27L282 32L258 30Q263 62 221 105Q246 86 294 88L296 93Q246 92 214 112L209 108Q254 66 240 29Z" />
        <path d="M282 28L298 33Q312 62 293 90M276 34Q292 62 270 86" fill="none" stroke="#1b1a1b" strokeWidth="3.500" />
        <path d="M185 131Q232 94 296 100Q262 106 246 122Q222 112 185 131Z" />
        <path d="M244 128Q264 106 300 108Q282 112 270 124L300 120Q286 138 262 132M222 127Q234 118 244 128" fill="none" stroke="#1b1a1b" strokeWidth="5" />
      </g>
      <text x="1719" y="881.500" fontSize="14.500" textLength="29" lengthAdjust="spacingAndGlyphs" stroke="#1b1a1b" strokeWidth=".4">New</text>
      <text x="1787" y="881.500" fontSize="14.500" textLength="57" lengthAdjust="spacingAndGlyphs" stroke="#1b1a1b" strokeWidth=".4">Nouveau</text>
      <text x="1695" y="903" fontSize="37.500" fontWeight="700" textLength="173" lengthAdjust="spacingAndGlyphs">Brunswick</text>
      <text x="1717" y="917.500" fontSize="12.500" fontWeight="900" textLength="130" fontFamily="Lato, sans-serif">CANADA</text>
    </svg>
  );
}

function Scrollbar({ thumb }: { thumb: string }) {
  return (
    <div className="absolute top-0 right-0 h-full w-[7px] bg-[#f0f0f0]">
      <div className={`bg-[#c6c6c6] ${thumb}`} />
    </div>
  );
}

function TravelColumn() {
  return (
    <div className="flex w-[475px] flex-col">
      <Panel className="h-[238px]">
        <div className="relative h-[29px] pr-[7px] text-center text-[18px] leading-[33px] font-semibold tracking-[0.25px]">
          Previous Day Vehicle Traffic
          <Scrollbar thumb="h-[26px]" />
        </div>
        <div className="grid h-[208px] grid-cols-[226px_247px] grid-rows-[100px_108px] border-t border-[#a3a3a3] text-center">
          <div className="border-r border-b border-[#a3a3a3]">
            <div className="text-[41px] leading-[50px] font-light tracking-[1.400px] [-webkit-text-stroke:0.4px]">Personal</div>
            <div className="text-[42px] leading-[47px] font-bold tracking-[0.3px]">778</div>
          </div>
          <div className="border-b border-[#a3a3a3]">
            <div className="text-[37px] leading-[49px] font-light tracking-[1.600px] [-webkit-text-stroke:0.4px]">Commercial</div>
            <div className="text-[41px] leading-[45px] font-bold">730</div>
          </div>
          <div className="border-r border-[#a3a3a3]">
            <div className="text-[43px] leading-[52px] font-light tracking-[1.300px] [-webkit-text-stroke:0.4px]">Refused</div>
            <div className="text-[43px] leading-[56px] font-bold">24</div>
          </div>
          <div>
            <div className="text-[36px] leading-[52px] font-light tracking-[0.700px] [-webkit-text-stroke:0.4px]">Refusal Rate</div>
            <div className="text-[43px] leading-[46px] font-bold tracking-[1.200px]">1.6 %</div>
          </div>
        </div>
      </Panel>
      <Panel className="mt-[11px] h-[294px]">
        <h3 className="pl-[6px] text-[15.500px] leading-[34px] tracking-[0.2px] text-[#24557a]">Personal Vehicle Traffic Statistics</h3>
        <div className="pt-[2px]">
          <VehicleChart />
        </div>
      </Panel>
      <Tabs inset="ml-[14px]" items={[["Personal Vehicles", "w-[137px]"], ["Commercial Vehicles", "w-[160px]"]]} />
      <Panel className="mt-[14px] h-[199px]">
        <div className="relative h-[110px] overflow-hidden pt-[7px] pr-[7px] text-center text-[12.500px] leading-[19px] whitespace-nowrap">
          This site and its content are made available by the New Brunswick Regional Health<br />
          Authorities (NB RHAs), the New Brunswick Department of Health (NB DH), the<br />
          New Brunswick Department of Justice and Public Safety (NB JPS), and NB JPS<br />
          GeoOperations as a public service without warranties of any kind, express or<br />
          implied. While this data may not be free from error or omission, care has been<br />
          taken to ensure the best possible quality. NB RHAs, NB DH, and NB JPS make no
          <Scrollbar thumb="h-[48px]" />
        </div>
        <div className="flex h-[87px] border-t border-[#a3a3a3]">
          <div className="w-[236px] border-r border-[#a3a3a3] text-center">
            <div className="pt-[15px] text-[22px] leading-[28px] font-light tracking-[0.7px] [-webkit-text-stroke:0.3px]">Last Update</div>
            <div className="text-[20px] leading-[26px] font-bold tracking-[0.8px]">10/1/2021</div>
          </div>
          <Logo />
        </div>
      </Panel>
    </div>
  );
}

/* ---------- left column ---------- */

function StatsColumn() {
  return (
    <div className="flex w-[240px] flex-col text-center">
      <Panel className="h-[152px]">
        <div className="text-[49px] leading-[58px] font-light tracking-[1.400px] [-webkit-text-stroke:0.4px]">Active</div>
        <div className="flex h-[60px] items-center justify-center gap-[8px]">
          <PeopleIcon />
          <span className="text-[50px] leading-[60px] font-bold tracking-[1.500px]">184</span>
        </div>
        <div className="text-[25px] leading-[32px] font-light tracking-[0.9px] [-webkit-text-stroke:0.3px]">New Today 14</div>
      </Panel>
      <Panel className="mt-[11px] h-[155px]">
        <div className="text-[37px] leading-[62px] font-light tracking-[1.100px] [-webkit-text-stroke:0.4px]">Total Cases</div>
        <div className="flex h-[46px] items-center justify-center gap-[8px]">
          <LaptopIcon />
          <span className="text-[50px] leading-[44px] font-bold tracking-[2px]">779</span>
        </div>
        <div className="text-[21px] leading-[41px] font-light tracking-[0.750px] [-webkit-text-stroke:0.3px]">Total Tests 162,098</div>
      </Panel>
      <Panel className="mt-[11px] h-[143px]">
        <div className="text-[39px] leading-[70px] font-light tracking-[1.600px] [-webkit-text-stroke:0.4px]">Recovered</div>
        <div className="flex h-[46px] items-center justify-center gap-[26px]">
          <PersonIcon />
          <span className="text-[58px] leading-[46px] font-bold tracking-[1.500px]">585</span>
        </div>
      </Panel>
      <Panel className="mt-[11px] h-[119px]">
        <div className="text-[22px] leading-[58px] font-light tracking-[0.8px] [-webkit-text-stroke:0.3px]">COVID-19 Related</div>
        <div className="text-[48px] leading-[26px] font-bold">9</div>
      </Panel>
      <Tabs items={[["Deaths", "w-[72px]"], ["Deaths", "w-[72px]"]]} gap="gap-[6px]" />
      <Panel className="mt-[14px] h-[108px]">
        <div className="text-[35px] leading-[40px] font-light tracking-[1.100px] [-webkit-text-stroke:0.4px]">In Hospital</div>
        <div className="flex h-[44px] items-center justify-center gap-[10px] pr-[4px]">
          <BedIcon />
          <span className="text-[33px] leading-[44px] font-bold">0</span>
        </div>
        <div className="text-[18px] leading-[22px] font-light [-webkit-text-stroke:0.3px]">In ICU 0</div>
      </Panel>
      <Tabs items={[["Current", "w-[76px]"], ["Total", "w-[59px]"]]} />
    </div>
  );
}

/* ---------- page ---------- */

export default function App() {
  return (
    <div className="h-[927px] w-[1904px] overflow-hidden bg-[#e4e4e4] px-[3px] pt-[5px] font-['Lato',sans-serif] text-[#0c4269]">
      <Header />
      <div className="mt-[12px] flex h-[39px] text-[17px] leading-[34px] font-bold tracking-[0.5px]">
        <Panel className="w-[649px] pl-[6px]">Health Statistics</Panel>
        <Panel className="ml-[11px] w-[752px] pl-[6px]">Maps</Panel>
        <Panel className="ml-[12px] w-[474px] pl-[10px]">Inter-Provincial Travel Statistics</Panel>
      </div>
      <main className="mt-[11px] flex">
        <StatsColumn />
        <div className="ml-[11px] flex w-[1160px] flex-col">
          <div className="flex gap-[11px]">
            <div className="w-[398px]">
              <Panel className="h-[475px]">
                <h2 className="pl-[7px] text-[26px] leading-[44px] font-light tracking-[1.150px] [-webkit-text-stroke:0.3px]">Tests By Age Group</h2>
                <AgeChart />
              </Panel>
              <Tabs items={[["Tests by Age", "w-[108px]"], ["Tests by Gender", "w-[130px]"]]} />
            </div>
            <div>
              <MapPanel />
              <Tabs
                gap="gap-[6px]"
                items={[
                  ["Recovery Phase", "w-[126px]"],
                  ["Traffic Control Points", "w-[156px]"],
                  ["Health Care Facilities", "w-[159px]"],
                  ["Neighbouring Jurisdictions", "w-[199px]"],
                ]}
              />
            </div>
          </div>
          <Panel className="mt-[14px] h-[235px]">
            <h2 className="pl-[7px] text-[37px] leading-[56px] font-light tracking-[1.750px] [-webkit-text-stroke:0.4px]">Active Case Epidemiology</h2>
            <EpidemiologyChart />
          </Panel>
          <Tabs
            items={[
              ["Active Cases", "w-[108px]"],
              ["Total Cases", "w-[100px]"],
              ["Cases by Zone", "w-[120px]"],
              ["Active Cases by Zone", "w-[163px]"],
              ["Case Origin", "w-[103px]"],
            ]}
          />
        </div>
        <div className="ml-[12px]">
          <TravelColumn />
        </div>
      </main>
    </div>
  );
}
